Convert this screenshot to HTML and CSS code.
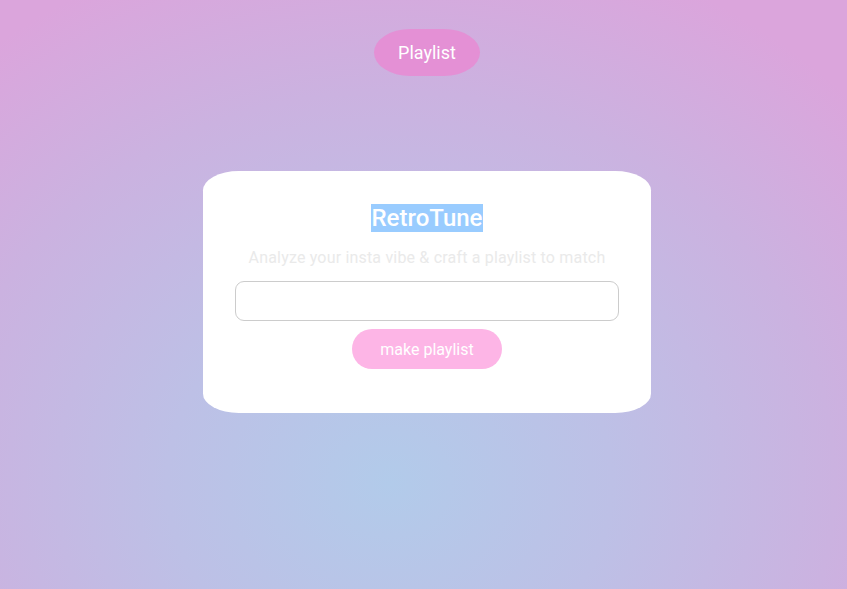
FILE: index.html
```html
<!DOCTYPE html>
<html lang="en">
<head>
<meta charset="utf-8">
<title>RetroTune</title>
<link rel="stylesheet" href="styles.css">
</head>
<body>
<div class="page">
  <header class="top">
    <button class="nav-btn">Playlist</button>
  </header>
  <main class="main">
    <section class="card">
      <h1 class="title"><span class="title-sel">RetroTune</span></h1>
      <p class="subtitle">Analyze your insta vibe &amp; craft a playlist to match</p>
      <input class="field" type="text" aria-label="Instagram handle">
      <button class="make-btn">make playlist</button>
    </section>
  </main>
</div>
</body>
</html>
```

FILE: styles.css
```css
* { box-sizing: border-box; }
html, body { margin: 0; height: 100%; }
body {
  font-family: Roboto, "Liberation Sans", Arial, sans-serif;
  background: radial-gradient(ellipse 75% 95% at 46% 82%, #b2cbea 0%, #bdc0e6 35%, #cbb2e0 70%, #dba5dc 100%);
  overflow: hidden;
}
.page {
  height: 100%;
  display: flex;
  flex-direction: column;
  align-items: center;
  padding-left: 7px;
}
.top {
  padding-top: 29px;
  display: flex;
  justify-content: center;
}
.nav-btn {
  width: 106px;
  height: 47px;
  border: none;
  border-radius: 36px / 23.5px;
  background: #e490d5;
  color: #fff;
  font-family: inherit;
  font-size: 18px;
  padding: 0;
}
.main {
  padding-top: 95px;
  display: flex;
  justify-content: center;
}
.card {
  width: 448px;
  height: 242px;
  background: #fff;
  border-radius: 8% / 8%;
  padding: 32px 32px 0;
  display: flex;
  flex-direction: column;
  align-items: center;
}
.title {
  margin: 0;
  font-size: 24px;
  font-weight: 500;
  line-height: 30px;
  color: #fff;
}
.title-sel {
  background: #99ccff;
  padding: 0 1px;
}
.subtitle {
  margin: 15px 0 0;
  font-size: 16px;
  letter-spacing: 0.18px;
  line-height: 20px;
  color: #eaeaea;
  white-space: nowrap;
}
.field {
  margin-top: 13px;
  width: 384px;
  height: 40px;
  border: 1px solid #cccccc;
  border-radius: 9px;
  background: #fff;
  font-family: inherit;
  font-size: 14px;
  padding: 0 10px;
}
.make-btn {
  margin-top: 8px;
  width: 150px;
  height: 40px;
  border: none;
  border-radius: 20px;
  background: #fdb5e6;
  color: #fff;
  font-family: inherit;
  font-size: 16px;
  padding: 0;
}
```
